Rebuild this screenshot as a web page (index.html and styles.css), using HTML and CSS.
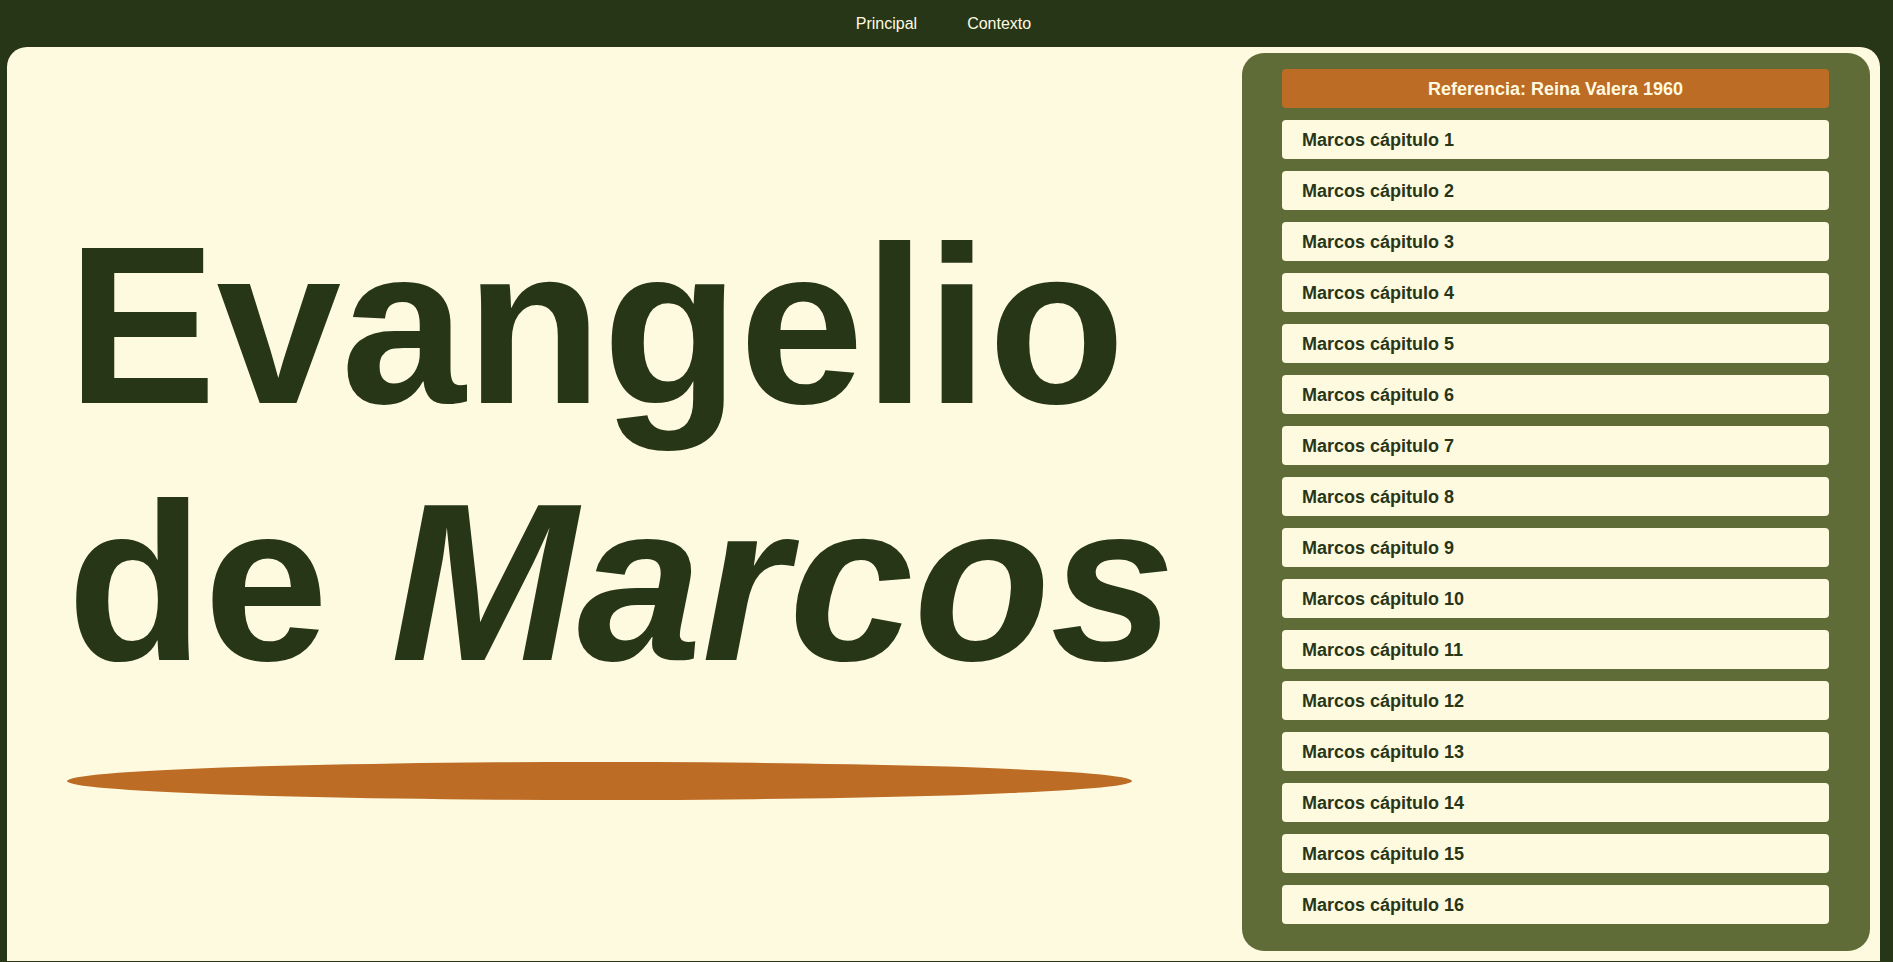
FILE: index.html
```html
<!DOCTYPE html>
<html lang="es">
<head>
<meta charset="utf-8">
<title>Evangelio de Marcos</title>
<link rel="stylesheet" href="styles.css">
</head>
<body>
<nav class="topnav">
  <a class="topnav-link" href="#">Principal</a>
  <a class="topnav-link" href="#">Contexto</a>
</nav>
<main class="page">
  <section class="hero">
    <h1 class="hero-title">Evangelio<br>de <em class="hero-em">Marcos</em></h1>
    <div class="hero-rule"></div>
  </section>
  <aside class="chapters">
    <div class="chapters-head">Referencia: Reina Valera 1960</div>
    <a class="chapter" href="#">Marcos cápitulo 1</a>
    <a class="chapter" href="#">Marcos cápitulo 2</a>
    <a class="chapter" href="#">Marcos cápitulo 3</a>
    <a class="chapter" href="#">Marcos cápitulo 4</a>
    <a class="chapter" href="#">Marcos cápitulo 5</a>
    <a class="chapter" href="#">Marcos cápitulo 6</a>
    <a class="chapter" href="#">Marcos cápitulo 7</a>
    <a class="chapter" href="#">Marcos cápitulo 8</a>
    <a class="chapter" href="#">Marcos cápitulo 9</a>
    <a class="chapter" href="#">Marcos cápitulo 10</a>
    <a class="chapter" href="#">Marcos cápitulo 11</a>
    <a class="chapter" href="#">Marcos cápitulo 12</a>
    <a class="chapter" href="#">Marcos cápitulo 13</a>
    <a class="chapter" href="#">Marcos cápitulo 14</a>
    <a class="chapter" href="#">Marcos cápitulo 15</a>
    <a class="chapter" href="#">Marcos cápitulo 16</a>
  </aside>
</main>
</body>
</html>
```
FILE: styles.css
```css
* { box-sizing: border-box; }

html, body {
  margin: 0;
  padding: 0;
  background: #283618;
  font-family: "Liberation Sans", Arial, sans-serif;
  overflow: hidden;
}

.topnav {
  height: 47px;
  display: flex;
  justify-content: center;
  align-items: center;
  gap: 50px;
  padding-right: 6px;
}

.topnav-link {
  color: #fefae0;
  text-decoration: none;
  font-size: 16px;
  line-height: 18px;
}

.page {
  margin: 0 13px 0 7px;
  height: 914px;
  background: #fefae0;
  border-radius: 20px 20px 0 0;
  display: flex;
  align-items: flex-start;
}

.hero {
  flex: 1;
  padding: 150px 0 0 60px;
}

.hero-title {
  margin: 0;
  color: #283618;
  font-size: 224px;
  font-weight: bold;
  line-height: normal;
  white-space: nowrap;
}

.hero-em {
  font-style: italic;
}

.hero-rule {
  width: 1065px;
  height: 38px;
  margin-top: 51px;
  background: #bc6c25;
  border-radius: 50%;
}

.chapters {
  width: 628px;
  margin: 6px 10px 0 0;
  padding: 16px 41px 27px 40px;
  background: #606c38;
  border-radius: 22px;
  display: flex;
  flex-direction: column;
  gap: 12px;
}

.chapters-head {
  height: 39px;
  background: #bc6c25;
  color: #fefae0;
  border-radius: 4px;
  font-size: 18px;
  font-weight: bold;
  display: flex;
  align-items: center;
  justify-content: center;
  padding-top: 2px;
}

.chapter {
  height: 39px;
  background: #fefae0;
  color: #283618;
  border-radius: 4px;
  font-size: 18px;
  font-weight: bold;
  text-decoration: none;
  display: flex;
  align-items: center;
  padding: 2px 0 0 20px;
}
```
